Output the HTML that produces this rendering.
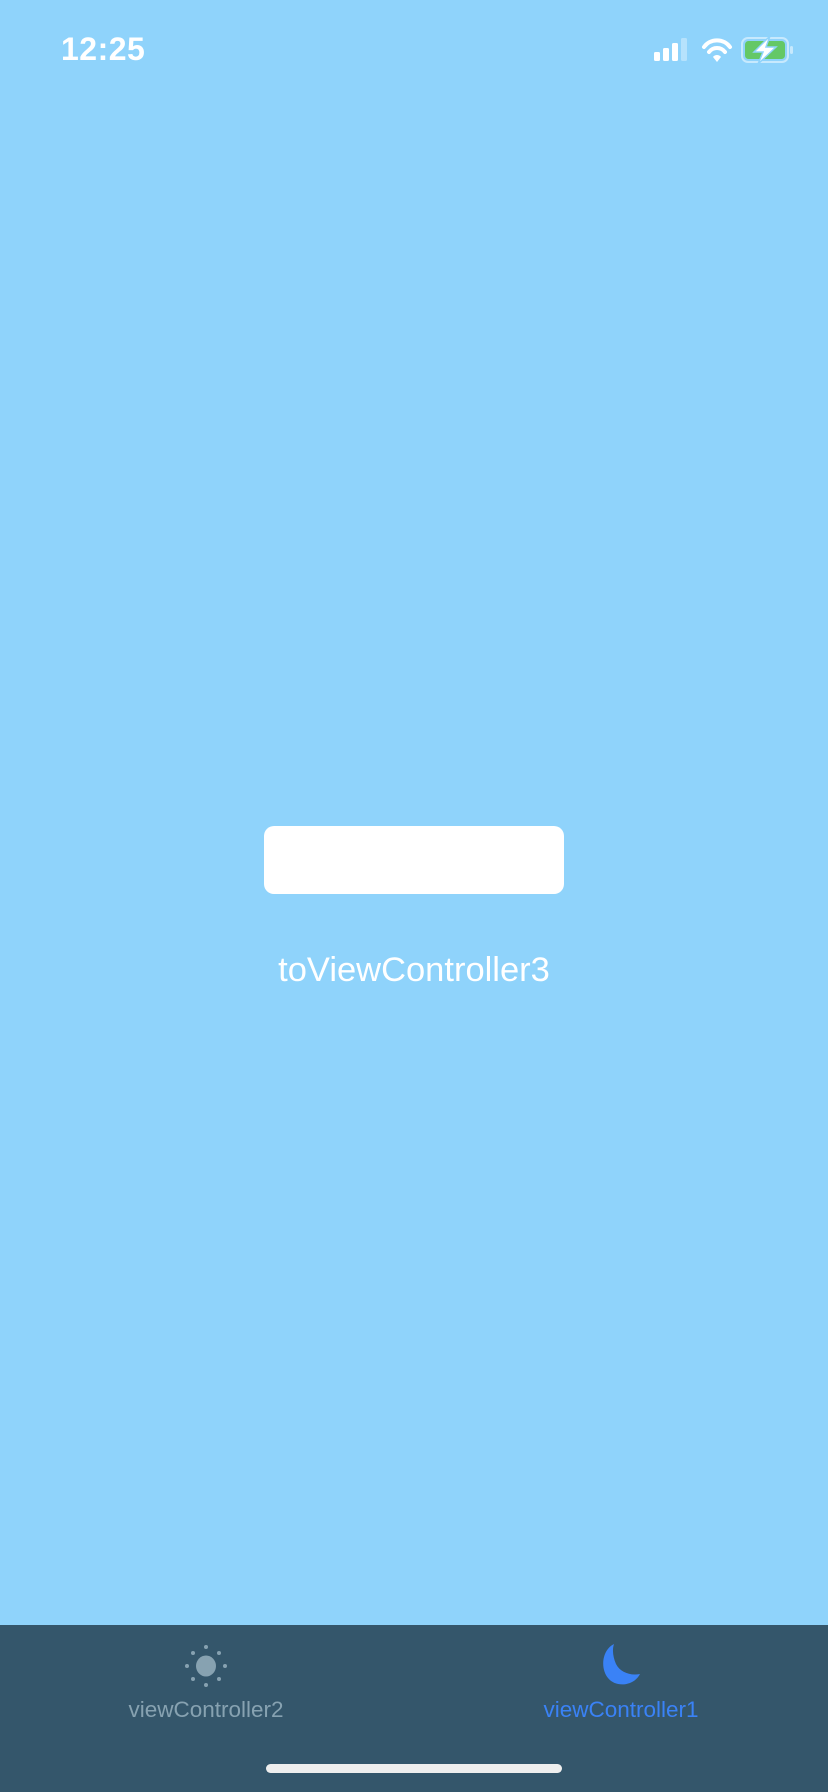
<!DOCTYPE html>
<html><head><meta charset="utf-8"><style>
html,body{margin:0;padding:0}
body{width:828px;height:1792px;background:#8fd3fb;position:relative;overflow:hidden;font-family:"Liberation Sans",sans-serif}
.time{position:absolute;left:61px;top:31px;font-size:32px;font-weight:bold;color:#fff;letter-spacing:0.5px}
.btn{position:absolute;left:264px;top:826px;width:300px;height:68px;background:#fff;border-radius:10px}
.lbl{position:absolute;left:0;width:828px;top:951px;text-align:center;color:#fff;font-size:34.5px}
.tab{position:absolute;left:0;top:1625px;width:828px;height:167px;background:#34566b}
.t{position:absolute;font-size:22.5px;width:300px;text-align:center;top:1697px}
.home{position:absolute;left:266px;top:1764px;width:296px;height:9px;border-radius:5px;background:#eee}
</style></head><body>
<div class="time">12:25</div>
<svg style="position:absolute;left:650px;top:36px" width="150" height="28" viewBox="0 0 150 28">
<rect x="4" y="16" width="6" height="9" rx="1.5" fill="#fff"/>
<rect x="13" y="12" width="6" height="13" rx="1.5" fill="#fff"/>
<rect x="22" y="7" width="6" height="18" rx="1.5" fill="#fff"/>
<rect x="31" y="2" width="6" height="23" rx="1.5" fill="#fff" opacity="0.35"/>
<path d="M54 11 A16 16 0 0 1 80 11" stroke="#fff" stroke-width="4" fill="none" stroke-linecap="round"/>
<path d="M59 16 A10 10 0 0 1 75 16" stroke="#fff" stroke-width="4" fill="none" stroke-linecap="round"/>
<path d="M63 21 L67 26 L71 21 A5 5 0 0 0 63 21Z" fill="#fff"/>
<rect x="92" y="2" width="46" height="24" rx="6" fill="none" stroke="#fff" stroke-opacity="0.5" stroke-width="2"/>
<rect x="95" y="5" width="40" height="18" rx="3.5" fill="#64c866"/>
<rect x="140" y="10" width="3" height="8" rx="1.5" fill="#fff" opacity="0.5"/>
<path d="M120 0 L104 16 L113 16 L108 28 L126 11 L116 11 Z" fill="#fff" stroke="#8fd3fb" stroke-width="1.5"/>
</svg>
<div class="btn"></div>
<div class="lbl">toViewController3</div>
<div class="tab"></div>
<svg style="position:absolute;left:184px;top:1644px" width="44" height="44" viewBox="0 0 44 44">
<g fill="#87a2b1"><ellipse cx="22" cy="22" rx="10" ry="10.5"/>
<circle cx="22" cy="3" r="2"/><circle cx="22" cy="41" r="2"/><circle cx="3" cy="22" r="2"/><circle cx="41" cy="22" r="2"/>
<circle cx="9" cy="9" r="2"/><circle cx="35" cy="9" r="2"/><circle cx="9" cy="35" r="2"/><circle cx="35" cy="35" r="2"/></g>
</svg>
<div class="t" style="left:56px;color:#87a2b1">viewController2</div>
<svg style="position:absolute;left:598px;top:1644px" width="46" height="44" viewBox="0 0 46 44">
<path d="M16 0 C4 6 2 24 10 34 C18 44 36 42 42 30 C32 32 22 28 18 20 C15 13 14 6 16 0Z" fill="#3a82f6"/>
</svg>
<div class="t" style="left:471px;color:#3a82f6">viewController1</div>
<div class="home"></div>
</body></html>
